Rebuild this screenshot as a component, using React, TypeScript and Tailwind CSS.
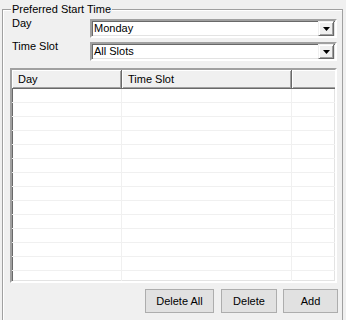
import React from 'react';

const font = { fontFamily: '"Liberation Sans", Arial, sans-serif' };

const ComboBox: React.FC<{ value: string }> = ({ value }) => (
  <div className="w-[247px] h-[19px] flex bg-white border-2 border-t-[#a0a0a0] border-l-[#a0a0a0] border-b-white border-r-white shadow-[inset_1px_1px_0_#696969,inset_-1px_-1px_0_#e3e3e3]">
    <div className="flex-1 pl-[2px] pt-[1px] text-[11px] leading-[13px] text-black">{value}</div>
    <div className="w-[16px] h-[15px] mr-[1px] bg-[#f0f0f0] flex items-center justify-center border border-t-[#f0f0f0] border-l-[#f0f0f0] border-b-[#696969] border-r-[#696969] shadow-[inset_1px_1px_0_#ffffff,inset_-1px_-1px_0_#a0a0a0]">
      <svg width="7" height="4" viewBox="0 0 7 4">
        <path d="M0 0h7L3.5 4z" fill="#000" />
      </svg>
    </div>
  </div>
);

const WinButton: React.FC<{ label: string; w: string; className?: string }> = ({ label, w, className = '' }) => (
  <button className={`${w} h-[24px] bg-[#e1e1e1] border border-[#adadad] text-[11px] leading-[13px] text-black flex items-center justify-center ${className}`}>
    {label}
  </button>
);

export default function App() {
  const rows = Array.from({ length: 14 });

  return (
    <div className="w-[346px] h-[320px] bg-[#f0f0f0] overflow-hidden pt-[2px]" style={font}>
      <fieldset className="ml-[2px] w-[341px] h-[340px] border border-[#a0a0a0] shadow-[inset_1px_1px_0_#ffffff]">
        <legend className="ml-[8px] px-[1px] bg-[#f0f0f0] text-[11px] leading-[14px] text-black">Preferred Start Time</legend>

        <div className="flex mt-[3px]">
          <div className="w-[87px] shrink-0 pl-[9px] -mt-[2px] text-[11px] leading-[13px] text-black">Day</div>
          <ComboBox value="Monday" />
        </div>
        <div className="flex mt-[4px]">
          <div className="w-[87px] shrink-0 pl-[9px] -mt-[2px] text-[11px] leading-[13px] text-black">Time Slot</div>
          <ComboBox value="All Slots" />
        </div>

        {/* list view */}
        <div className="ml-[7px] mt-[7px] w-[327px] h-[215px] bg-white overflow-hidden border-2 border-t-[#a0a0a0] border-l-[#a0a0a0] border-b-white border-r-white shadow-[inset_1px_1px_0_#696969,inset_-1px_-1px_0_#e3e3e3]">
          <div className="flex h-[19px] bg-[#f0f0f0] text-[11px] leading-[13px] text-black">
            <div className="w-[110px] pl-[6px] pt-[3px] border-r border-b border-[#696969] shadow-[inset_1px_1px_0_#ffffff,inset_-1px_-1px_0_#a0a0a0]">Day</div>
            <div className="w-[170px] pl-[6px] pt-[3px] border-r border-b border-[#696969] shadow-[inset_1px_1px_0_#ffffff,inset_-1px_-1px_0_#a0a0a0]">Time Slot</div>
            <div className="flex-1 border-b border-[#696969] shadow-[inset_1px_1px_0_#ffffff,inset_0_-1px_0_#a0a0a0]" />
          </div>
          {rows.map((_, i) => (
            <div key={i} className="flex h-[14px] border-b border-[#f0f0f0]">
              <div className="w-[110px] border-r border-[#f0f0f0]" />
              <div className="w-[170px] border-r border-[#f0f0f0]" />
              <div className="flex-1" />
            </div>
          ))}
        </div>

        <div className="flex justify-end mt-[6px] pr-[4px]">
          <WinButton label="Delete All" w="w-[69px]" />
          <WinButton label="Delete" w="w-[56px]" className="ml-[7px]" />
          <WinButton label="Add" w="w-[55px]" className="ml-[6px]" />
        </div>
      </fieldset>
    </div>
  );
}
